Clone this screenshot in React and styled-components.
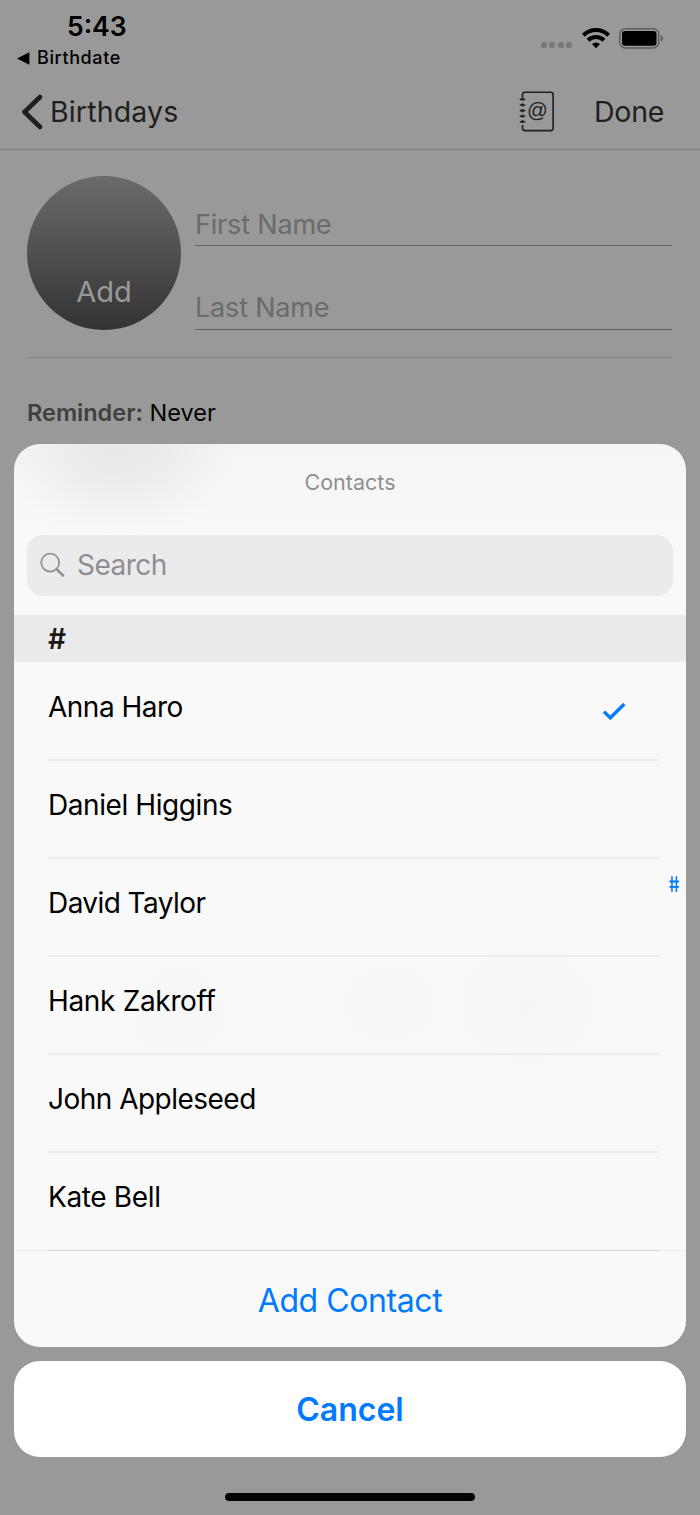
import styled, { createGlobalStyle } from "styled-components";

const GlobalStyle = createGlobalStyle`
  * { box-sizing: border-box; }
  body {
    margin: 0;
    background: #999;
    font-family: Inter, "Liberation Sans", sans-serif;
    color: #000;
  }
`;

const contacts = [
  { id: 1, name: "Anna Haro", spacing: -0.5, selected: true },
  { id: 2, name: "Daniel Higgins", spacing: -0.42 },
  { id: 3, name: "David Taylor", spacing: -0.58 },
  { id: 4, name: "Hank Zakroff", spacing: -0.33 },
  { id: 5, name: "John Appleseed", spacing: -0.52 },
  { id: 6, name: "Kate Bell", spacing: -0.35 },
];

const App = () => {
  return (
    <Screen>
      <GlobalStyle />
      <StatusBar>
        <StatusLeft>
          <Clock>5:43</Clock>
          <BackToApp>
            <svg width="13" height="13" viewBox="0 0 13 13">
              <path d="M0 6.5 12.4 0.2V12.8Z" fill="#000" />
            </svg>
            Birthdate
          </BackToApp>
        </StatusLeft>
        <StatusIcons>
          <Dots><i /><i /><i /><i /></Dots>
          <svg width="28" height="21" viewBox="0 0 28 21" fill="none" stroke="#000" strokeWidth="4">
            <path d="M1.4 7.2a18 18 0 0 1 25.2 0" />
            <path d="M6 12.2a11.6 11.6 0 0 1 16 0" />
            <path d="M14 20.2 10 16.1a5.8 5.8 0 0 1 8 0Z" fill="#000" stroke="none" />
          </svg>
          <svg width="45" height="21" viewBox="0 0 45 21">
            <rect x="0.8" y="0.8" width="39" height="19.2" rx="5.6" fill="none" stroke="#5c5c5c" strokeWidth="1.4" />
            <rect x="3" y="3" width="34.5" height="14.8" rx="3" fill="#000" />
            <path d="M41.8 7.3c2.9 1.2 2.9 5 0 6.2Z" fill="#5c5c5c" />
          </svg>
        </StatusIcons>
      </StatusBar>

      <NavBar>
        <BackButton>
          <svg width="23" height="36" viewBox="0 0 23 36" fill="none" stroke="#1f1f1f" strokeWidth="4.6" strokeLinecap="round" strokeLinejoin="round">
            <path d="M20 3 4.5 18 20 33" />
          </svg>
          Birthdays
        </BackButton>
        <NavRight>
          <svg width="36" height="41" viewBox="0 0 36 41" fill="none" stroke="#1f1f1f" strokeWidth="1.6">
            <path d="M3.5 6V3.5a2.3 2.3 0 0 1 2.3-2.3h26a2.3 2.3 0 0 1 2.3 2.3v33.8a2.3 2.3 0 0 1-2.3 2.3h-26a2.3 2.3 0 0 1-2.3-2.3V34.5" />
            <path d="M0.8 8.4h5.4M0.8 14h5.4M0.8 19.6h5.4M0.8 25.2h5.4M0.8 30.8h5.4" />
            <path d="M3.5 5.500v4M3.5 12.300v3.300M3.5 17.900v3.300M3.5 23.500v3.300M3.5 29.100v3M3.5 34v2" strokeWidth="1.4" />
            <BookAt x="18.3" y="26">@</BookAt>
          </svg>
          <Done>Done</Done>
        </NavRight>
      </NavBar>

      <Form>
        <Person>
          <Photo>Add</Photo>
          <Fields>
            <Field>First Name</Field>
            <Field>Last Name</Field>
          </Fields>
        </Person>
        <Reminder><b>Reminder:</b> Never</Reminder>
      </Form>

      <ActionSheet>
        <Sheet>
          <SheetTitle>Contacts</SheetTitle>
          <SearchBox>
            <svg width="26" height="26" viewBox="0 0 26 26" fill="none" stroke="#8e8e93">
              <circle cx="10.2" cy="10.6" r="9" strokeWidth="1.7" />
              <path d="M16.8 17.4 23.2 23.6" strokeWidth="2.6" strokeLinecap="round" />
            </svg>
            Search
          </SearchBox>
          <SectionHeader>#</SectionHeader>
          <List>
            {contacts.map((contact) => (
              <Row key={contact.id} $spacing={contact.spacing}>
                {contact.name}
                {contact.selected && (
                  <svg width="24" height="20" viewBox="0 0 24 20" fill="none" stroke="#007aff" strokeWidth="3.4">
                    <path d="M2 9.6 8.3 15.9 22.3 2" />
                  </svg>
                )}
              </Row>
            ))}
            <IndexMark>#</IndexMark>
          </List>
          <AddContact>Add Contact</AddContact>
        </Sheet>
        <Cancel>Cancel</Cancel>
        <HomeIndicator />
      </ActionSheet>
    </Screen>
  );
};

const Screen = styled.div`
  position: relative;
  width: 700px;
  height: 1515px;
  overflow: hidden;
  background: #999;
`;

const StatusBar = styled.div`
  display: flex;
  justify-content: space-between;
  height: 74px;
  padding: 10px 36px 0 17px;
`;

const StatusLeft = styled.div`
  display: flex;
  flex-direction: column;
`;

const Clock = styled.div`
  padding-left: 50px;
  font-size: 26.5px;
  line-height: 32px;
  font-weight: 600;
`;

const BackToApp = styled.div`
  display: flex;
  align-items: center;
  gap: 7px;
  margin-top: 4px;
  font-size: 18px;
  line-height: 24px;
  font-weight: 500;
  letter-spacing: 0.6px;
`;

const StatusIcons = styled.div`
  display: flex;
  align-items: flex-start;
  padding-top: 18px;
  gap: 9px;
`;

const Dots = styled.div`
  display: flex;
  gap: 2.4px;
  margin-right: 1px;
  padding-top: 14px;

  i {
    width: 6px;
    height: 6px;
    border-radius: 2px;
    background: #7a7a7a;
  }
`;

const NavBar = styled.div`
  display: flex;
  align-items: center;
  justify-content: space-between;
  height: 76px;
  padding: 0 36px 0 20px;
  border-bottom: 1px solid #7d7d7d;
  font-size: 28.5px;
  color: #1f1f1f;
`;

const BackButton = styled.div`
  display: flex;
  align-items: center;
  gap: 7px;
  letter-spacing: 0.16px;
`;

const NavRight = styled.div`
  display: flex;
  align-items: center;
  gap: 39px;
`;

const BookAt = styled.text`
  font-family: "Liberation Sans", sans-serif;
  font-size: 20.5px;
  text-anchor: middle;
  fill: #1f1f1f;
  stroke: none;
`;

const Done = styled.span`
  letter-spacing: -0.3px;
`;

const Form = styled.div`
  padding: 26px 28px 0 27px;
`;

const Person = styled.div`
  display: flex;
  gap: 14px;
  height: 182px;
  border-bottom: 1px solid #808080;
`;

const Photo = styled.div`
  display: flex;
  justify-content: center;
  width: 154px;
  height: 154px;
  padding-top: 98px;
  border-radius: 50%;
  background: linear-gradient(#6b6b6b, #333);
  color: #999;
  font-size: 29px;
  line-height: 36px;
`;

const Fields = styled.div`
  flex: 1;
`;

const Field = styled.div`
  height: 70px;
  padding-top: 30px;
  border-bottom: 1px solid #636363;
  font-size: 27px;
  line-height: 37px;
  letter-spacing: -0.18px;
  color: #6b6b6b;

  & + & {
    height: 71px;
    margin-top: 13px;
  }
`;

const Reminder = styled.div`
  padding-top: 39px;
  font-size: 23.5px;
  line-height: 32px;

  b {
    font-weight: 600;
    color: #404040;
  }
`;

const ActionSheet = styled.div`
  position: absolute;
  inset: 444px 14px 0;
  display: flex;
  flex-direction: column;
`;

const Sheet = styled.div`
  height: 903px;
  border-radius: 26px;
  overflow: hidden;
  background:
    radial-gradient(ellipse 120px 95px at 105px 0, rgba(228, 228, 228, 0.75), rgba(230, 230, 230, 0.6) 40%, rgba(240, 240, 240, 0)),
    radial-gradient(ellipse 75px 65px at 512px 562px, #f5f5f5, rgba(247, 247, 247, 0)),
    radial-gradient(ellipse 60px 50px at 375px 560px, #f7f7f7, rgba(248, 248, 248, 0)),
    radial-gradient(ellipse 60px 60px at 165px 570px, #f7f7f7, rgba(248, 248, 248, 0)),
    linear-gradient(#f5f5f5, #f9f9f9 90px);
`;

const SheetTitle = styled.div`
  height: 91px;
  padding-top: 23px;
  text-align: center;
  font-size: 21.5px;
  line-height: 30px;
  color: #8f8f8f;
`;

const SearchBox = styled.div`
  display: flex;
  align-items: center;
  gap: 11px;
  height: 61px;
  margin: 0 13px 19px;
  padding: 0 13px 1px;
  border-radius: 16px;
  background: rgba(0, 0, 0, 0.055);
  font-size: 28px;
  letter-spacing: -0.5px;
  color: #8e8e93;
`;

const SectionHeader = styled.div`
  height: 47px;
  padding-left: 34px;
  background: #eaeaea;
  font-size: 28px;
  line-height: 48px;
  font-weight: 600;
  color: #1a1a1a;
`;

const List = styled.div`
  position: relative;
  padding: 1px 26px 0 34px;
  border-bottom: 1px solid #ebebeb;
`;

const Row = styled.div`
  display: flex;
  align-items: center;
  justify-content: space-between;
  height: 98px;
  padding: 0 34px 9px 0;
  border-bottom: 2px solid #ededed;
  font-size: 28px;
  letter-spacing: ${({ $spacing }) => $spacing}px;

  svg {
    margin-top: 10px;
  }

  /* the last row's line lies on the list's own bottom border */
  &:nth-last-child(2) {
    margin-bottom: -1px;
    padding-bottom: 10px;
    border-bottom: 1px solid #d4d4d4;
  }
`;

const IndexMark = styled.div`
  position: absolute;
  right: 5px;
  top: 210px;
  font-size: 21.5px;
  line-height: 24px;
  font-weight: 500;
  color: #007aff;
  transform: scaleX(0.8) skewX(9deg);
`;

const AddContact = styled.div`
  text-align: center;
  font-size: 32px;
  line-height: 99px;
  letter-spacing: -0.42px;
  color: #007aff;
`;

const Cancel = styled.div`
  height: 96px;
  margin-top: 14px;
  border-radius: 26px;
  background: #fff;
  text-align: center;
  font-size: 32px;
  line-height: 98px;
  font-weight: 600;
  color: #007aff;
`;

const HomeIndicator = styled.div`
  width: 250px;
  height: 8px;
  margin: 36px auto 0;
  border-radius: 4px;
  background: #050505;
`;

export default App;
